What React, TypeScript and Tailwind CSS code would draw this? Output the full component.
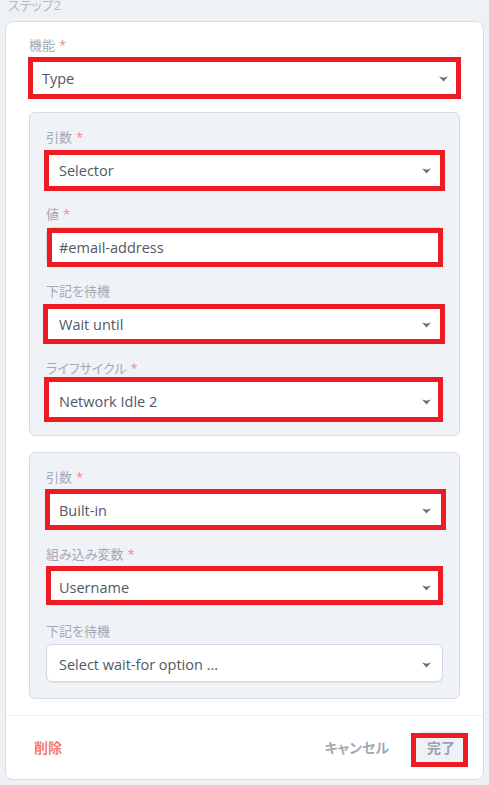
const font = "font-['Open_Sans','Noto_Sans_CJK_JP',sans-serif]";

function Caret() {
  return (
    <svg width="9" height="6" viewBox="0 0 9 6" className="shrink-0">
      <path d="M0 0.5 L4.5 1.8 L9 0.5 L4.5 5.5 Z" fill="#6b6e75" />
    </svg>
  );
}

// red annotation box drawn over a control
function Mark({ inset = "-inset-[2px]" }: { inset?: string }) {
  return <span className={`pointer-events-none absolute ${inset} border-[5px] border-[#ed1c24]`} />;
}

type FieldProps = {
  label: string;
  required?: boolean;
  value: string;
  select?: boolean;
  marked?: boolean;
  inset?: string;
};

function Field({ label, required, value, select = true, marked = true, inset }: FieldProps) {
  return (
    <div className="mb-4">
      <div className="mb-[3px] text-[13px] leading-5 text-[#a3a9b3] [font-feature-settings:'palt']">
        {label}
        {required && <span className="ml-1 text-[#f08a8a]">*</span>}
      </div>
      <div className="relative flex h-[38px] items-center justify-between rounded-md border border-[#d3d8e0] bg-white pt-[3px] pl-3 pr-[11px] text-[14.5px] text-[#525864] shadow-[0_1px_1px_rgba(0,0,0,0.06)]">
        <span>{value}</span>
        {select && <Caret />}
        {marked && <Mark inset={inset} />}
      </div>
    </div>
  );
}

export default function App() {
  return (
    <div className={`min-h-[785px] overflow-hidden bg-[#eef2f7] px-[5px] ${font}`}>
      <div className="-mt-[5px] pl-[3px] text-[13px] leading-5 text-[#b4bac4] [font-feature-settings:'palt']">
        ステップ2
      </div>
      <div className="mt-[6px] rounded-lg border border-[#d6dde8] bg-white">
        <div className="px-[23px] pt-[13px]">
          <Field label="機能" required value="Type" inset="-top-[2px] -left-[2px] -right-[2px] -bottom-[4px]" />

          <div className="rounded-md border border-[#d6dce6] bg-[#eff2f7] px-4 pt-[14px]">
            <Field label="引数" required value="Selector" inset="-top-[1px] -left-[3px] -right-[3px] -bottom-[4px]" />
            <Field label="値" required value="#email-address" select={false} inset="top-0 left-0 -right-[1px] -bottom-[3px]" />
            <Field label="下記を待機" value="Wait until" inset="-top-[1px] -left-[4px] -right-[3px] -bottom-[3px]" />
            <Field label="ライフサイクル" required value="Network Idle 2" inset="-top-[5px] -left-[3px] -right-[1px] -bottom-[4px]" />
          </div>

          <div className="mt-4 rounded-md border border-[#d6dce6] bg-[#eff2f7] px-4 pt-[14px]">
            <Field label="引数" required value="Built-in" inset="-top-[2px] -left-[2px] -right-[4px] -bottom-[3px]" />
            <Field label="組み込み変数" required value="Username" inset="-top-[2px] -left-[1px] -right-[1px] -bottom-[1px]" />
            <Field label="下記を待機" value="Select wait-for option ..." marked={false} />
          </div>
          <div className="h-4" />
        </div>

        <div className="flex h-[64px] items-center justify-between border-t border-[#eceff3] px-4">
          <button className="px-3 py-[6px] text-[14px] font-bold text-[#f57b7b]">削除</button>
          <div className="flex items-center gap-[14px]">
            <button className="px-3 py-[6px] text-[14px] font-bold text-[#a3a9b4] [font-feature-settings:'palt']">
              キャンセル
            </button>
            <button className="relative rounded-md bg-[#eef1f6] px-3 py-[6px] text-[14px] font-bold text-[#9aa1ac]">
              完了
              <span className="pointer-events-none absolute -left-[4px] -right-[1px] top-[2px] -bottom-[3px] border-[5px] border-[#ed1c24]" />
            </button>
          </div>
        </div>
      </div>
    </div>
  );
}
